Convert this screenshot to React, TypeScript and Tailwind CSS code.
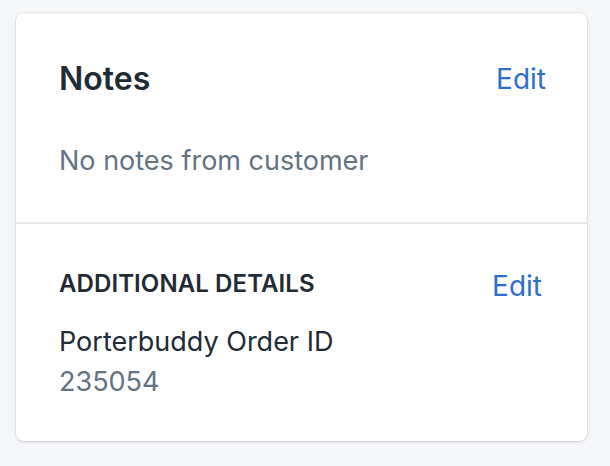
export default function App() {
  return (
    <div className="min-h-screen bg-[#f4f6f8] pt-[13px] pl-[16px] pr-[23px] pb-[24px] font-['Inter','Noto_Sans',sans-serif]">
      <div className="rounded-[8px] bg-white shadow-[0_0_0_1px_rgba(63,63,68,0.06),0_1px_3px_0_rgba(63,63,68,0.15)]">
        <section className="pt-[46px] pb-[41px] pl-[43px] pr-[41px]">
          <div className="flex items-center justify-between">
            <h2 className="text-[32px] leading-[40px] font-semibold text-[#212b36]">Notes</h2>
            <button className="text-[28px] leading-[40px] text-[#2c6ecb]">Edit</button>
          </div>
          <p className="mt-[42px] text-[27px] leading-[40px] text-[#637381]">No notes from customer</p>
        </section>
        <div className="h-[2px] bg-[#e4e7eb]" />
        <section className="pt-[44px] pb-[39px] pl-[43px] pr-[45px]">
          <div className="flex items-start justify-between">
            <h3 className="text-[24px] leading-[32px] font-semibold tracking-[0.1px] uppercase text-[#212b36]">
              Additional details
            </h3>
            <button className="mt-[2px] text-[28px] leading-[32px] text-[#2c6ecb]">Edit</button>
          </div>
          <div className="mt-[20px] text-[27px] leading-[40px]">
            <p className="text-[#212b36]">Porterbuddy Order ID</p>
            <p className="text-[#637381]">235054</p>
          </div>
        </section>
      </div>
    </div>
  );
}
